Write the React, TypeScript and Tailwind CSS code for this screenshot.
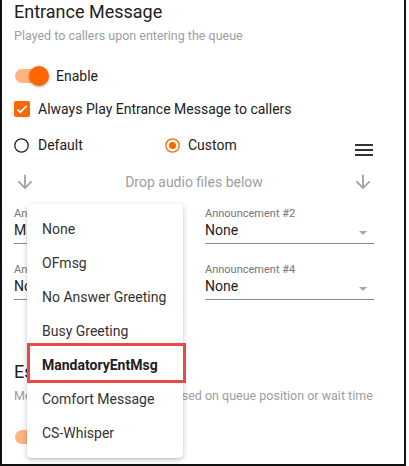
const Toggle = () => {
  return (
    <div className="relative h-[14px] w-[33px] rounded-full bg-[#ffb380]">
      <span className="absolute right-[-1px] top-[-3px] h-[20px] w-[20px] rounded-full bg-[#ff6600] shadow-[0_1px_3px_rgba(0,0,0,0.35)]" />
    </div>
  );
};

const Checkbox = () => {
  return (
    <span className="flex h-[16px] w-[16px] items-center justify-center rounded-[2px] bg-[#ff6600]">
      <svg width="14" height="14" viewBox="0 0 24 24" fill="none" stroke="#fff" strokeWidth="3">
        <path d="M4 12.5l5 5L20 6.5" />
      </svg>
    </span>
  );
};

const RadioOff = () => (
  <svg width="15" height="15" viewBox="0 0 15 15">
    <circle cx="7.5" cy="7.5" r="6.7" fill="none" stroke="#222" strokeWidth="1.3" />
  </svg>
);

const RadioOn = () => (
  <svg width="15" height="15" viewBox="0 0 15 15">
    <circle cx="7.5" cy="7.5" r="6.7" fill="none" stroke="#ff6600" strokeWidth="1.3" />
    <circle cx="7.5" cy="7.5" r="3.6" fill="#ff6600" />
  </svg>
);

const ArrowDown = () => (
  <svg width="22" height="22" viewBox="0 0 24 24" fill="#a3a3a3">
    <path d="M20 12l-1.41-1.41L13 16.17V4h-2v12.17l-5.58-5.59L4 12l8 8 8-8z" />
  </svg>
);

const MenuIcon = () => (
  <svg width="24" height="24" viewBox="0 0 24 24" fill="#333" className="mr-[-2px] translate-y-[5px]">
    <path d="M3 18h18v-2H3v2zm0-5h18v-2H3v2zm0-7v2h18V6H3z" />
  </svg>
);

const Field = ({ label, value }: { label: string; value: string }) => {
  return (
    <div className="border-b border-[#8c8c8c] pb-[3px]">
      <div className="text-[11px] leading-[12px] text-[#757575]">{label}</div>
      <div className="flex h-[20px] items-center justify-between">
        <span className="text-[14px] leading-[20px] text-[#212121]">{value}</span>
        <span className="mr-[7px] mt-[6px] h-0 w-0 border-x-[4px] border-t-[4px] border-x-transparent border-t-[#a8a8a8]" />
      </div>
    </div>
  );
};

const options = [
  "None",
  "OFmsg",
  "No Answer Greeting",
  "Busy Greeting",
  "MandatoryEntMsg",
  "Comfort Message",
  "CS-Whisper",
];

export default function App() {
  return (
    <div className="relative h-[466px] w-[406px] overflow-hidden border-x-2 border-b-2 border-[#111] bg-white pl-[12px] font-['Roboto',sans-serif]">
      <div className="w-[360px]">
        <h2 className="text-[18px] leading-[24px] text-[#212121]">Entrance Message</h2>
        <p className="mt-[4px] whitespace-nowrap text-[12.5px] leading-[16px] text-[#9e9e9e]">
          Played to callers upon entering the queue
        </p>

        <div className="mt-[20px] flex h-[24px] items-center">
          <div className="ml-[1px]">
            <Toggle />
          </div>
          <span className="ml-[8px] text-[14px] text-[#212121]">Enable</span>
        </div>

        <div className="mt-[9px] flex h-[24px] items-center">
          <Checkbox />
          <span className="ml-[8px] text-[14px] text-[#212121]">Always Play Entrance Message to callers</span>
        </div>

        <div className="mt-[12px] flex h-[24px] items-center">
          <div className="flex w-[151px] items-center">
            <RadioOff />
            <span className="ml-[9px] text-[14px] text-[#212121]">Default</span>
          </div>
          <div className="flex items-center">
            <RadioOn />
            <span className="ml-[8px] text-[14px] text-[#212121]">Custom</span>
          </div>
          <div className="ml-auto">
            <MenuIcon />
          </div>
        </div>

        <div className="mt-[13px] flex h-[24px] items-center justify-between">
          <ArrowDown />
          <span className="text-[14px] text-[#9e9e9e]">Drop audio files below</span>
          <ArrowDown />
        </div>

        <div className="mt-[14px] grid grid-cols-2 gap-x-[22px] gap-y-[20px]">
          <Field label="Announcement #1" value="MandatoryEntMsg" />
          <Field label="Announcement #2" value="None" />
          <Field label="Announcement #3" value="None" />
          <Field label="Announcement #4" value="None" />
        </div>

        <h2 className="mt-[60px] text-[18px] leading-[24px] text-[#212121]">Escalation</h2>
        <p className="mt-[4px] whitespace-nowrap text-[12.5px] leading-[16px] text-[#9e9e9e]">
          Messages played to callers based on queue position or wait time
        </p>
        <div className="mt-[21px] flex h-[24px] items-center">
          <div className="ml-[1px]">
            <Toggle />
          </div>
          <span className="ml-[8px] text-[14px] text-[#212121]">Enable</span>
        </div>
      </div>

      <div className="absolute left-[25px] top-[204px] w-[156px] rounded-[4px] bg-white py-[8px] shadow-[0_2px_6px_rgba(0,0,0,0.18),0_1px_2px_rgba(0,0,0,0.12)]">
        {options.map((o) => (
          <div
            key={o}
            className={
              o === "MandatoryEntMsg"
                ? "relative flex h-[34px] items-center pl-[15px] text-[14px] font-bold text-[#212121]"
                : "relative flex h-[34px] items-center pl-[15px] text-[14px] text-[#333]"
            }
          >
            {o}
            {o === "MandatoryEntMsg" && (
              <span className="absolute bottom-[-1px] left-0 right-[-3px] top-[-5px] border-[3px] border-[#e84a4a]" />
            )}
          </div>
        ))}
      </div>
    </div>
  );
}
